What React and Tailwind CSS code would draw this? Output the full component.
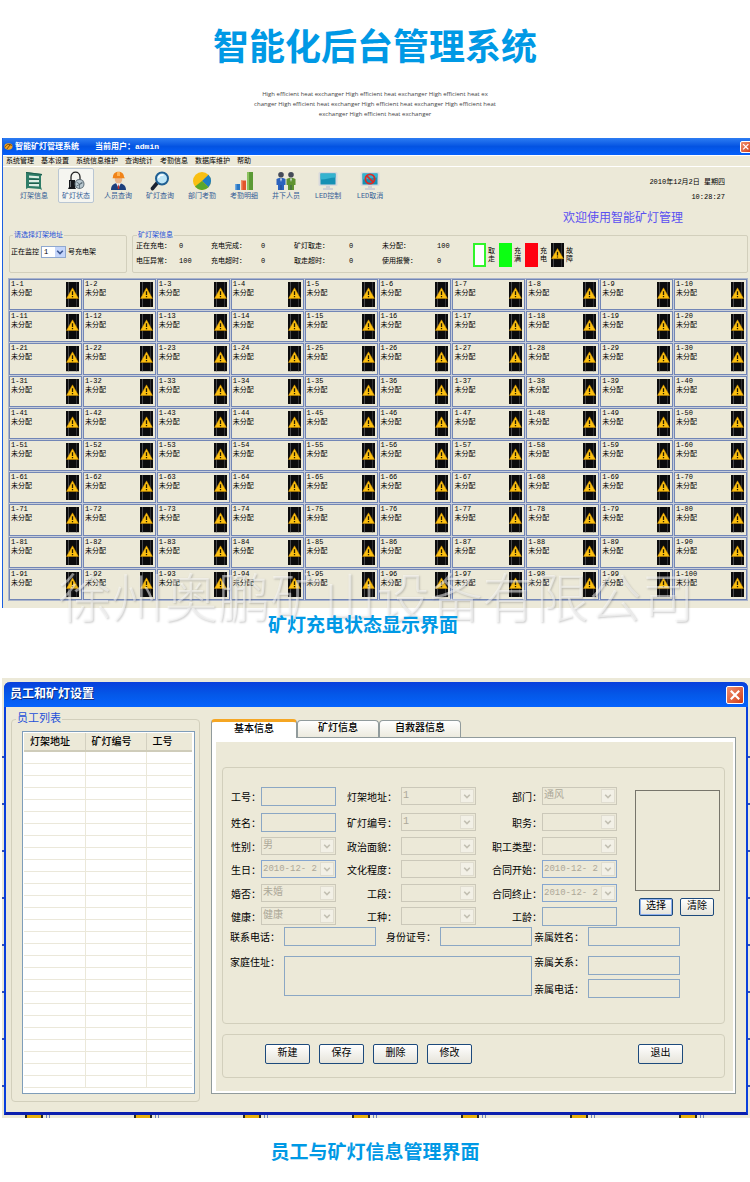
import React, { useState } from "react";

const menus = ["系统管理", "基本设置", "系统信息维护", "查询统计", "考勤信息", "数据库维护", "帮助"];

const stats = [
  ["正在充电：", "0", "充电完成：", "0", "矿灯取走：", "0", "未分配：", "100"],
  ["电压异常：", "100", "充电超时：", "0", "取走超时：", "0", "使用报警：", "0"],
];

const lamps = Array.from({ length: 100 }, (_, i) => `1-${i + 1}`);
const listRows = Array.from({ length: 28 }, (_, i) => i);

const RackIcon = () => (
  <svg viewBox="0 0 20 20" className="w-5 h-5">
    <path d="M2 1l16 2v1l-1 1v11l1 3-2-1-12-1-2 1z" fill="#2f7d68" />
    <path d="M5 4.500l10 .8v2l-10-.5zM5 8.800l10 .3v2.200H5zM5 13h10v2.400l-10-.4z" fill="#dfeee4" />
    <path d="M2 1.500l16 2M5 8.200l10 .3M5 12.400h10" stroke="#1d5c4c" strokeWidth="1" fill="none" />
  </svg>
);

const LampIcon = () => (
  <svg viewBox="0 0 20 20" className="w-5 h-5">
    <path d="M5 10V6c0-6.500 9-6.500 9 0v3" fill="none" stroke="#222" strokeWidth="1.300" />
    <path d="M3 9h6v7l1 2H2l1-2z" fill="#16181c" />
    <path d="M4 10h1v6H4z" fill="#6b7076" />
    <circle cx="13.500" cy="13" r="5" fill="#5c6b75" />
    <circle cx="13.500" cy="13" r="4" fill="#b9c8d0" />
    <path d="M10.500 11l3 2 3-2M13.500 13v4M10.500 15l6-3" stroke="#53636e" strokeWidth="0.800" fill="none" />
  </svg>
);

const WorkerIcon = () => (
  <svg viewBox="0 0 20 20" className="w-5 h-5">
    <path d="M3 19c0-5 3-7 7-7s8 2 8 7z" fill="#1d3f7c" />
    <path d="M8 12l2.500 5 2.500-5z" fill="#f4f4f4" />
    <path d="M10.500 13l1 4-1 1.500-1-1.500z" fill="#c9302a" />
    <ellipse cx="10.500" cy="8" rx="3.800" ry="4.600" fill="#eab68b" />
    <path d="M5 6c0-7 11-7 11 0l1 1.200H4.500z" fill="#f08318" />
    <path d="M9 1.500c1-.6 2-.6 3 0V5H9z" fill="#ffb455" />
  </svg>
);

const SearchIcon = () => (
  <svg viewBox="0 0 20 20" className="w-5 h-5">
    <path d="M7.500 11.500l-5 6" stroke="#1b2230" strokeWidth="3.600" strokeLinecap="round" />
    <circle cx="12" cy="7.500" r="6" fill="#bfe6f7" stroke="#1f5f92" strokeWidth="2" />
    <path d="M8.500 7c.5-2.500 3-3.500 5-2.800" stroke="#fff" strokeWidth="1.500" fill="none" />
  </svg>
);

const PieIcon = () => (
  <svg viewBox="0 0 20 20" className="w-5 h-5">
    <circle cx="10" cy="10" r="9" fill="#f9bf12" />
    <path d="M10 10l6.500-6.300A9 9 0 0 1 16.500 16.300z" fill="#1f7fc2" />
    <path d="M10 10l6.500 6.300A9 9 0 0 1 3 15.600z" fill="#5aa72c" />
  </svg>
);

const BarIcon = () => (
  <svg viewBox="0 0 20 20" className="w-5 h-5">
    <path d="M1 13h5v6H1z" fill="#2a78c4" />
    <path d="M7 9.500h5V19H7z" fill="#e2552b" />
    <path d="M13 1h6v18h-6z" fill="#5b9a35" />
    <path d="M13 1h2v18h-2z" fill="#8cc25f" />
    <path d="M1 13h1.500v6H1z" fill="#6eaae2" />
    <path d="M7 9.500h1.500V19H7z" fill="#f18a62" />
  </svg>
);

const PeopleIcon = () => (
  <svg viewBox="0 0 20 20" className="w-5 h-5">
    <circle cx="5" cy="3.800" r="2.800" fill="#454b59" />
    <circle cx="15" cy="3.800" r="2.800" fill="#454b59" />
    <path d="M.5 8c1-1.500 8-1.500 9 0v6H8v5H2v-5H.5z" fill="#2b62bd" />
    <path d="M10.500 8c1-1.500 8-1.500 9 0v6H18v5h-6v-5h-1.500z" fill="#5f9230" />
    <path d="M4 7.500h2L5 11zM14 7.500h2L15 11z" fill="#dfe7f2" />
    <path d="M5 14v5M15 14v5" stroke="#1f3a63" strokeWidth="0.600" />
  </svg>
);

const MonitorIcon = ({ blocked }) => (
  <svg viewBox="0 0 20 20" className="w-5 h-5">
    <rect x="0.500" y="1" width="19" height="14" rx="1.500" fill="#d8d9dc" />
    <rect x="2.500" y="2.500" width="15" height="11" fill="#1590b4" />
    <path d="M2.500 2.500h15v4c-5 0-9 2-15 2z" fill="#35b3cf" />
    <path d="M8 15h4v2h3v2H5v-2h3z" fill="#cfd0d4" />
    {blocked && (
      <g fill="none" stroke="#d92a25" strokeWidth="1.800">
        <circle cx="10" cy="8" r="4.600" />
        <path d="M6.800 4.800l6.400 6.400" />
      </g>
    )}
  </svg>
);

const tools = [
  { label: "灯架信息", icon: <RackIcon /> },
  { label: "矿灯状态", icon: <LampIcon /> },
  { label: "人员查询", icon: <WorkerIcon /> },
  { label: "矿灯查询", icon: <SearchIcon /> },
  { label: "部门考勤", icon: <PieIcon /> },
  { label: "考勤明细", icon: <BarIcon /> },
  { label: "井下人员", icon: <PeopleIcon /> },
  { label: "LED控制", icon: <MonitorIcon /> },
  { label: "LED取消", icon: <MonitorIcon blocked /> },
];

const FaultLamp = () => (
  <svg viewBox="0 0 13 26" preserveAspectRatio="none" className="w-[13px] h-full shrink-0">
    <rect width="13" height="26" fill="#0b0b0c" />
    <path d="M2.500 0v26" stroke="#4a4a4c" strokeWidth="1" />
    <path d="M10.500 0v26" stroke="#333335" strokeWidth="1" />
    <path d="M6.500 6L12.500 17H.5z" fill="#fcc010" stroke="#c98d05" strokeWidth="0.500" />
    <path d="M6.500 9.500v4M6.500 14.500v1.300" stroke="#221a00" strokeWidth="1.300" />
  </svg>
);

const Chevron = ({ className }) => (
  <svg viewBox="0 0 10 10" className={className}>
    <path d="M1.500 3.500L5 7l3.500-3.500" fill="none" stroke="currentColor" strokeWidth="2" />
  </svg>
);

const CloseButton = ({ className }) => (
  <button
    aria-label="关闭"
    className={`flex items-center justify-center rounded-xs border border-white bg-gradient-to-br from-[#f0906e] to-[#d03a12] text-white ${className}`}
  >
    <svg viewBox="0 0 10 10" className="w-3/4 h-3/4">
      <path d="M1.500 1.500l7 7M8.500 1.500l-7 7" stroke="currentColor" strokeWidth="1.800" />
    </svg>
  </button>
);

const Swatch = ({ children, text }) => (
  <div className="flex items-center w-[26px] h-6">
    {children}
    <span className="w-2 ml-0.5 leading-2">{text}</span>
  </div>
);

const LampWindow = () => {
  const [active, setActive] = useState("矿灯状态");

  return (
    <section className="relative ml-0.5 border-l border-[#1b5fe0] bg-[#ece9d8] text-[7px] leading-2 text-black">
      <header className="flex items-center h-[17px] pl-px overflow-hidden bg-gradient-to-b from-[#2c7cf2] via-[#0353e2] to-[#0560fb] text-white text-[8px] font-bold">
        <svg viewBox="0 0 10 10" className="w-[9px] h-[9px] mr-0.5">
          <ellipse cx="5" cy="5" rx="4.500" ry="3.500" fill="#f3a21e" />
          <path d="M1 6c2-4 5-4 8-2M3 8l4-5" stroke="#6b3b06" strokeWidth="1" fill="none" />
        </svg>
        <span>智能矿灯管理系统</span>
        <span className="ml-4">当前用户：admin</span>
        <CloseButton className="w-3 h-3 ml-auto -mr-0.5 shrink-0" />
      </header>

      <nav className="flex items-center gap-[7px] h-3 pl-[3px] border-t border-b border-white">
        {menus.map((m) => (
          <button key={m}>{m}</button>
        ))}
      </nav>

      <div className="flex justify-between">
        <div className="flex items-start pl-[10px] pt-px">
          {tools.map((t) => (
            <button
              key={t.label}
              onClick={() => setActive(t.label)}
              className={`flex flex-col items-center w-9 h-[35px] mx-[3px] pt-0.5 rounded-xs border text-[#345d96] ${
                active === t.label ? "border-[#b9c6d3] bg-[#f5f5f0]" : "border-transparent"
              }`}
            >
              {t.icon}
              <span className="mt-px whitespace-nowrap">{t.label}</span>
            </button>
          ))}
        </div>
        <div className="flex flex-col items-end pt-[11px] pr-[25px]">
          <time className="leading-2">2010年12月2日 星期四</time>
          <time className="mt-[7px] leading-2">10:28:27</time>
          <p className="mt-2.5 mr-[42px] text-[12px] leading-4 text-[#5a50f0]">欢迎使用智能矿灯管理</p>
        </div>
      </div>

      <div className="flex items-stretch gap-[5px] pl-1.5 pr-0.5 mt-1">
        <fieldset className="w-[118px] h-[42px] shrink-0 rounded-xs border border-[#d2cfbc] px-px">
          <legend className="ml-0.5 px-px text-[#2450d8]">请选择灯架地址</legend>
          <div className="flex items-center mt-[7px]">
            <label htmlFor="rack">正在监控</label>
            <span className="relative mx-0.5">
              <select
                id="rack"
                className="block w-[25px] h-3 pl-0.5 appearance-none border border-[#8fa8cf] bg-white leading-2"
              >
                <option>1</option>
              </select>
              <Chevron className="absolute right-px top-px w-2.5 h-2.5 p-px bg-[#c4d5fa] text-[#3b5794] pointer-events-none" />
            </span>
            <span>号充电架</span>
          </div>
        </fieldset>
        <fieldset className="flex-1 h-[42px] min-w-0 rounded-xs border border-[#d2cfbc] px-[3px]">
          <legend className="ml-px px-px text-[#2450d8]">矿灯架信息</legend>
          <div className="flex items-center h-8">
            <div className="grid grid-cols-[43px_32px_50px_33px_55px_33px_55px_36px] gap-y-[7px] pb-[3px]">
              {stats.flat().map((s, i) => (
                <span key={i}>{s}</span>
              ))}
            </div>
            <Swatch text="取走">
              <i className="w-[13px] h-6 border-2 border-[#31f52a] bg-white" />
            </Swatch>
            <Swatch text="充满">
              <i className="w-[13px] h-6 bg-[#0cff12]" />
            </Swatch>
            <Swatch text="充电">
              <i className="w-[13px] h-6 bg-[#ff0010]" />
            </Swatch>
            <Swatch text="故障">
              <FaultLamp />
            </Swatch>
          </div>
        </fieldset>
      </div>

      <div className="pl-[5px] pr-0.5 pt-[5px] pb-[7px]">
        <div className="grid grid-cols-10 auto-rows-fr gap-px h-[323px] border border-[#aab4cc] bg-[#c6ccd8]">
          {lamps.map((name) => (
            <div key={name} className="flex justify-between min-h-0 min-w-0 border border-[#7286b6] bg-[#ece9d8] pl-px pr-0.5">
              <div className="leading-[9px]">
                <div>{name}</div>
                <div>未分配</div>
              </div>
              <div className="py-0.5">
                <FaultLamp />
              </div>
            </div>
          ))}
        </div>
      </div>

      <p className="absolute inset-x-0 -bottom-[26px] text-center text-[53px] leading-[60px] font-light whitespace-nowrap text-white/50 [text-shadow:1px_1px_2px_rgba(90,90,90,0.3)] pointer-events-none">
        徐州奥鹏矿山设备有限公司
      </p>
    </section>
  );
};

const Field = ({ id, label, area, className, labelClass = "pt-1.5" }) => (
  <>
    <label htmlFor={id} className={`justify-self-end whitespace-nowrap ${labelClass}`}>
      {label}：
    </label>
    {area ? (
      <textarea id={id} className={`block resize-none border border-[#8ba7c4] ${className}`} />
    ) : (
      <input id={id} type="text" className="block w-full h-[19px] px-1 border border-[#8ba7c4]" />
    )}
  </>
);

const Choice = ({ id, label, value, date, labelClass = "pt-1.5" }) => (
  <>
    <label htmlFor={id} className={`justify-self-end whitespace-nowrap ${labelClass}`}>
      {label}：
    </label>
    <span className="relative">
      <select
        id={id}
        disabled
        className={`block w-full h-[18px] pl-px pb-0.5 appearance-none border text-[#aca899] opacity-100 ${
          date ? "border-[#86a6cf] text-[9px]" : "border-[#cbc8b9] text-[10px]"
        }`}
      >
        <option>{value}</option>
      </select>
      <Chevron className="absolute right-0.5 top-0.5 w-3.5 h-3.5 p-0.5 border border-[#e0ddd0] bg-[#f2f0e6] text-[#c2bfb2] pointer-events-none" />
    </span>
  </>
);

const XpButton = ({ children, focus, className }) => (
  <button
    className={`rounded-xs border border-[#1d4a7c] bg-gradient-to-b from-white to-[#e6e4da] text-[10px] leading-4 ${
      focus ? "ring-1 ring-inset ring-[#8fb0ee]" : ""
    } ${className}`}
  >
    {children}
  </button>
);

const EdgeMarks = () => (
  <div className="w-0.5 shrink-0 pt-[29px] overflow-hidden">
    {listRows.slice(0, 8).map((i) => (
      <div key={i} className="h-[47px] border-b-2 border-[#3450b4]" />
    ))}
  </div>
);

const tabs = ["基本信息", "矿灯信息", "自救器信息"];

const StaffWindow = () => {
  const [tab, setTab] = useState(tabs[0]);

  return (
    <section className="ml-0.5 mt-[35px] pt-1 bg-[#ece9d8] text-[10px] leading-4 text-black">
      <div className="flex h-[433px]">
        <EdgeMarks />
        <div className="flex flex-col flex-1 min-w-0 rounded-t-md border-x-2 border-b-3 border-[#0a3fdc] border-b-[#0b1fae] bg-[#ece9d8]">
          <header className="-mx-0.5 flex items-center justify-between h-[25px] pl-1.5 pr-1 rounded-t-md bg-gradient-to-b from-[#0a3fdc] via-[#0458e8] to-[#0563fd] text-white text-[12px] font-bold">
            <h2 className="[text-shadow:1px_1px_0_#0a2a80]">员工和矿灯设置</h2>
            <CloseButton className="w-[18px] h-[18px]" />
          </header>

          <div className="flex flex-1 min-h-0 gap-[11px] pl-[5px] pr-2.5 pt-1">
            <fieldset className="flex flex-col w-[189px] h-[391px] shrink-0 rounded-sm border border-[#d2cfbc] pl-2.5 pr-1 pb-[7px]">
              <legend className="-ml-1.5 px-px text-[#2450d8] text-[11px]">员工列表</legend>
              <div className="mt-1 h-[363px] p-px pr-0.5 border border-[#7f9db9] bg-white overflow-hidden">
                <table className="w-full table-fixed border-collapse text-left">
                  <thead>
                    <tr className="h-[18px] bg-[#ece9d8] border-b-2 border-[#cfccba]">
                      <th className="w-[61px] pl-1.5 pt-0.5 leading-3 font-medium border-r border-[#d3d0c0]">灯架地址</th>
                      <th className="w-[61px] pl-1.5 pt-0.5 leading-3 font-medium border-r border-[#d3d0c0]">矿灯编号</th>
                      <th className="pl-1.5 pt-0.5 leading-3 font-medium">工号</th>
                    </tr>
                  </thead>
                  <tbody>
                    {listRows.map((r) => (
                      <tr key={r} className="h-3 border-b border-[#ebe8da]">
                        <td className="border-r border-[#ebe8da]" />
                        <td className="border-r border-[#ebe8da]" />
                        <td />
                      </tr>
                    ))}
                  </tbody>
                </table>
              </div>
            </fieldset>

            <div className="flex flex-col flex-1 min-w-0 pt-2">
              <div className="flex items-end h-[18px]" role="tablist">
                {tabs.map((t) => (
                  <button
                    key={t}
                    role="tab"
                    aria-selected={tab === t}
                    onClick={() => setTab(t)}
                    className={`rounded-t-sm border-x font-medium ${
                      tab === t
                        ? "relative -mb-px w-[86px] h-[19px] border-t-3 border-x-[#919b9c] border-t-[#f5a623] bg-white leading-3"
                        : "w-[82px] h-[17px] border-t border-[#919b9c] bg-gradient-to-b from-white to-[#eceade] leading-4"
                    }`}
                  >
                    {t}
                  </button>
                ))}
              </div>

              <div className="h-[357px] border border-[#919b9c] bg-white p-1 pr-0.5 pb-0.5">
                <div className="h-full bg-[#ece9d8] pl-1.5 pr-2 pt-[25px]">
                  <div className="h-[257px] rounded-sm border border-[#d2cfbc] pt-[15px]">
                    <div className="flex">
                      <div className="grid grid-cols-[38px_75px_65px_75px_66px_75px] grid-rows-[26px_26px_22px_24px_24px_22px] items-center">
                        <Field id="no" label="工号" />
                        <Choice id="addr" label="灯架地址" value="1" labelClass="pt-1.5 pr-1" />
                        <Choice id="dept" label="部门" value="通风" />
                        <Field id="name" label="姓名" />
                        <Choice id="lamp" label="矿灯编号" value="1" labelClass="pt-1.5 pr-1" />
                        <Choice id="duty" label="职务" value="" />
                        <Choice id="sex" label="性别" value="男" />
                        <Choice id="party" label="政治面貌" value="" labelClass="pt-1.5 pr-1" />
                        <Choice id="kind" label="职工类型" value="" />
                        <Choice id="birth" label="生日" value={"2010-12-\u00a02"} date />
                        <Choice id="edu" label="文化程度" value="" labelClass="pt-1.5 pr-1" />
                        <Choice id="start" label="合同开始" value={"2010-12-\u00a02"} date />
                        <Choice id="married" label="婚否" value="未婚" />
                        <Choice id="section" label="工段" value="" labelClass="pt-1.5 pr-1" />
                        <Choice id="end" label="合同终止" value={"2010-12-\u00a02"} date />
                        <Choice id="health" label="健康" value="健康" />
                        <Choice id="craft" label="工种" value="" labelClass="pt-1.5 pr-1" />
                        <Field id="years" label="工龄" />
                      </div>
                      <div className="flex-1 pl-[18px] pt-[7px]">
                        <div className="w-[85px] h-[101px] border border-[#77756b]" />
                        <div className="flex gap-[7px] mt-[7px] ml-1">
                          <XpButton className="w-[34px] h-[18px]" focus>选择</XpButton>
                          <XpButton className="w-[34px] h-[18px]">清除</XpButton>
                        </div>
                      </div>
                    </div>
                    <div className="grid grid-cols-[61px_92px_64px_92px_56px_92px] grid-rows-[29px_23px_19px] items-start">
                      <Field id="phone" label="联系电话" labelClass="pt-1 pr-1" />
                      <Field id="card" label="身份证号" labelClass="pt-1 pr-1" />
                      <Field id="kin" label="亲属姓名" labelClass="pt-1 pr-1" />
                      <Field id="home" label="家庭住址" area className="col-span-3 row-span-2 w-full h-10" labelClass="pr-1" />
                      <Field id="relation" label="亲属关系" labelClass="pr-1" />
                      <span />
                      <Field id="kinphone" label="亲属电话" labelClass="pt-1 pr-1" />
                    </div>
                  </div>

                  <div className="flex items-start gap-[9px] h-11 mt-[10px] pt-[9px] pl-[42px] pr-[41px] rounded-sm border border-[#d2cfbc]">
                    <XpButton className="w-[45px] h-5">新建</XpButton>
                    <XpButton className="w-[45px] h-5">保存</XpButton>
                    <XpButton className="w-[45px] h-5">删除</XpButton>
                    <XpButton className="w-[45px] h-5">修改</XpButton>
                    <XpButton className="w-[45px] h-5 ml-auto">退出</XpButton>
                  </div>
                </div>
              </div>
            </div>
          </div>
        </div>
        <EdgeMarks />
      </div>
      <div className="flex h-[3px] pl-[23px] overflow-hidden">
        {listRows.slice(0, 7).map((i) => (
          <div key={i} className="flex w-[109px] shrink-0 gap-[3px]">
            <i className="w-[18px] h-[3px] border-x-2 border-[#2a2a22] bg-[#e9b10c]" />
            <i className="w-1 h-[3px] border-x border-[#7286b6]" />
          </div>
        ))}
      </div>
    </section>
  );
};

const App = () => {
  return (
    <main className="w-full overflow-hidden bg-white pb-3 font-['Liberation_Mono','Noto_Sans_CJK_SC',monospace]">
      <h1 className="pt-[31px] text-center text-[36px] leading-10 font-bold text-[#0099e5]">智能化后台管理系统</h1>
      <p className="mt-[18px] mb-[19px] text-center text-[6px] leading-[10px] text-[#444] font-['Open_Sans',sans-serif]">
        High efficient heat exchanger High efficient heat exchanger High efficient heat ex
        <br />
        changer High efficient heat exchanger High efficient heat exchanger High efficient heat
        <br />
        exchanger High efficient heat exchanger
      </p>

      <LampWindow />
      <p className="relative mt-[3px] pr-6 text-center text-[19px] leading-8 font-bold text-[#0099e5]">矿灯充电状态显示界面</p>

      <StaffWindow />
      <p className="mt-5 text-center text-[19px] leading-8 font-bold text-[#0099e5]">员工与矿灯信息管理界面</p>
    </main>
  );
};

export default App;
